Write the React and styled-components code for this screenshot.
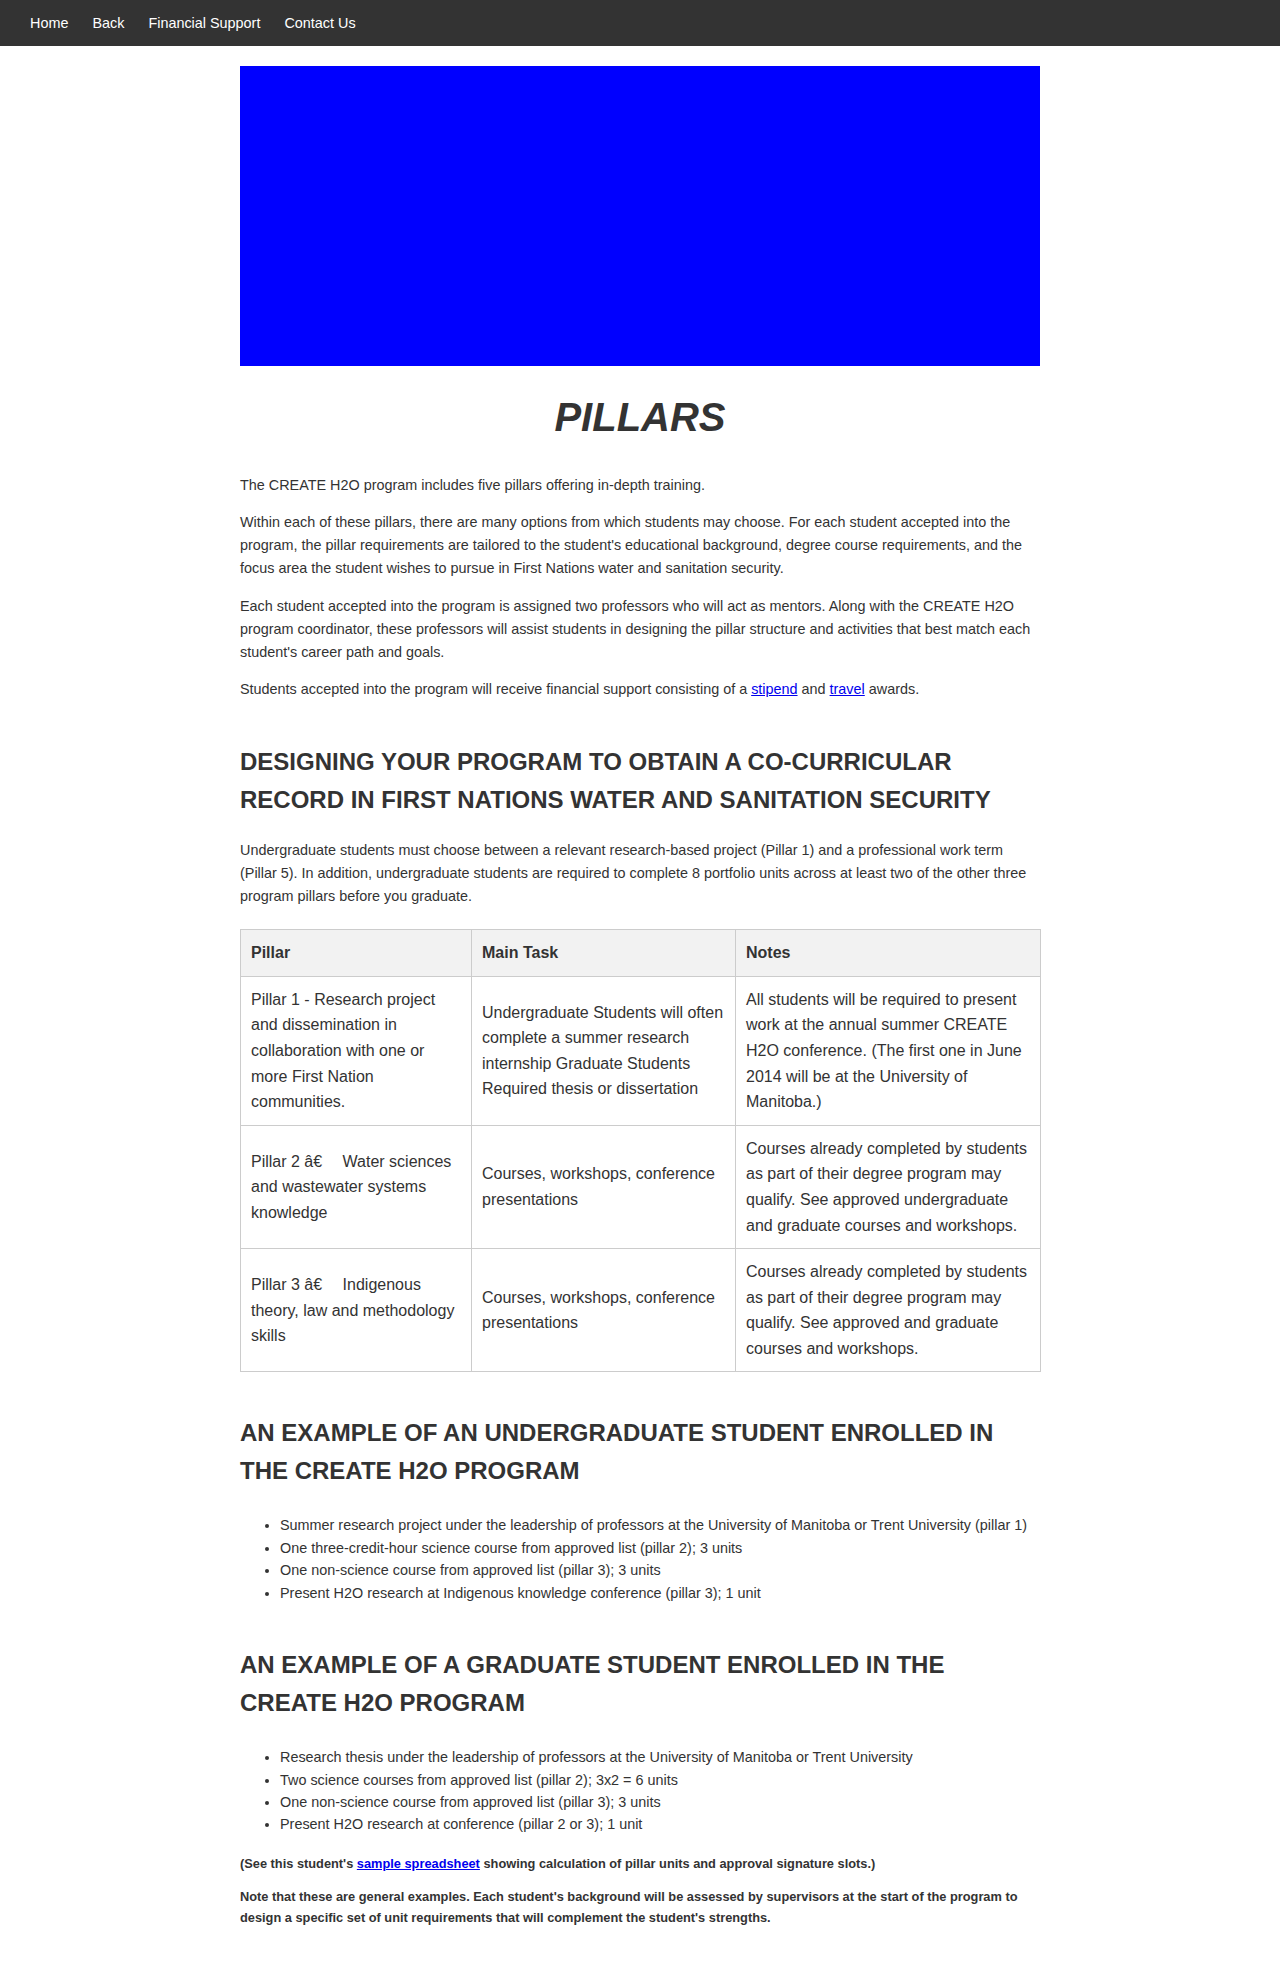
import React from 'react';
import styled, { createGlobalStyle } from 'styled-components';

// Global page styles
const GlobalStyle = createGlobalStyle`
	body {
		margin: 0;
		background: #fff;
		color: #333;
		font-family: "Liberation Sans", Arial, Helvetica, sans-serif;
	}
`;

// Top navigation bar
const Nav = styled.nav`
	display: flex;
	align-items: center;
	height: 46px;
	padding: 0 18px;
	background: #333;
`;

const NavLink = styled.a`
	padding: 0 12px;
	color: #fff;
	font-size: 14.4px;
	text-decoration: none;
`;

// Centered content column
const Page = styled.main`
	width: 800px;
	margin: 0 auto;
	padding: 20px 0 20px;
`;

const Banner = styled.div`
	height: 300px;
	background: #0000ff;
`;

const Title = styled.h1`
	margin: 27px 0 33px;
	font-size: 40px;
	line-height: 48px;
	font-style: italic;
	font-weight: bold;
	text-align: center;
`;

const Text = styled.p`
	margin: 14.4px 0;
	font-size: 14.4px;
	line-height: 23px;
`;

const SectionHeading = styled.h2`
	margin: 42px 0 21px;
	font-size: 24px;
	line-height: 37.5px;
	font-weight: bold;
`;

const Link = styled.a`
	color: #0000ee;
	text-decoration: underline;
`;

// Pillar table
const PillarTable = styled.table`
	width: 100%;
	margin: 21px 0;
	border-collapse: collapse;
	table-layout: fixed;
	font-size: 16px;
	line-height: 25.6px;
`;

// widths are content widths (padding + border come on top)
const HeadCell = styled.th`
	width: ${({ $width }) => $width};
	padding: 10px;
	border: 1px solid #ccc;
	background: #f2f2f2;
	text-align: left;
	font-weight: bold;
`;

const Cell = styled.td`
	padding: 10px;
	border: 1px solid #ccc;
	vertical-align: middle;
`;

const BulletList = styled.ul`
	margin: 25px 0 18px;
	padding-left: 40px;
	font-size: 14.4px;
	line-height: 22.4px;
	list-style: disc;
`;

const Note = styled.p`
	margin: 12.8px 0;
	font-size: 12.8px;
	line-height: 20.5px;
	font-weight: bold;
`;

const rows = [
	{
		pillar: 'Pillar 1 - Research project and dissemination in collaboration with one or more First Nation communities.',
		task: 'Undergraduate Students will often complete a summer research internship Graduate Students Required thesis or dissertation',
		notes: 'All students will be required to present work at the annual summer CREATE H2O conference. (The first one in June 2014 will be at the University of Manitoba.)'
	},
	{
		pillar: 'Pillar 2 \u00e2\u20ac\u2003 Water sciences and wastewater systems knowledge',
		task: 'Courses, workshops, conference presentations',
		notes: 'Courses already completed by students as part of their degree program may qualify. See approved undergraduate and graduate courses and workshops.'
	},
	{
		pillar: 'Pillar 3 \u00e2\u20ac\u2003 Indigenous theory, law and methodology skills',
		task: 'Courses, workshops, conference presentations',
		notes: 'Courses already completed by students as part of their degree program may qualify. See approved and graduate courses and workshops.'
	}
];

const undergrad = [
	'Summer research project under the leadership of professors at the University of Manitoba or Trent University (pillar 1)',
	'One three-credit-hour science course from approved list (pillar 2); 3 units',
	'One non-science course from approved list (pillar 3); 3 units',
	'Present H2O research at Indigenous knowledge conference (pillar 3); 1 unit'
];

const grad = [
	'Research thesis under the leadership of professors at the University of Manitoba or Trent University',
	'Two science courses from approved list (pillar 2); 3x2 = 6 units',
	'One non-science course from approved list (pillar 3); 3 units',
	'Present H2O research at conference (pillar 2 or 3); 1 unit'
];

const App = () => {
	return (
		<>
			<GlobalStyle />
			<Nav>
				<NavLink href="#">Home</NavLink>
				<NavLink href="#">Back</NavLink>
				<NavLink href="#">Financial Support</NavLink>
				<NavLink href="#">Contact Us</NavLink>
			</Nav>
			<Page>
				<Banner />
				<Title>PILLARS</Title>
				<Text>The CREATE H2O program includes five pillars offering in-depth training.</Text>
				<Text>
					Within each of these pillars, there are many options from which students may choose. For each student accepted into the program, the pillar requirements are tailored to the student's educational background, degree course requirements, and the focus area the student wishes to pursue in First Nations water and sanitation security.
				</Text>
				<Text>
					Each student accepted into the program is assigned two professors who will act as mentors. Along with the CREATE H2O program coordinator, these professors will assist students in designing the pillar structure and activities that best match each student's career path and goals.
				</Text>
				<Text>
					Students accepted into the program will receive financial support consisting of a <Link href="#">stipend</Link> and <Link href="#">travel</Link> awards.
				</Text>

				<SectionHeading>DESIGNING YOUR PROGRAM TO OBTAIN A CO-CURRICULAR RECORD IN FIRST NATIONS WATER AND SANITATION SECURITY</SectionHeading>
				<Text>
					Undergraduate students must choose between a relevant research-based project (Pillar 1) and a professional work term (Pillar 5). In addition, undergraduate students are required to complete 8 portfolio units across at least two of the other three program pillars before you graduate.
				</Text>

				<PillarTable>
					<thead>
						<tr>
							<HeadCell $width="210px">Pillar</HeadCell>
							<HeadCell $width="243px">Main Task</HeadCell>
							<HeadCell $width="284px">Notes</HeadCell>
						</tr>
					</thead>
					<tbody>
						{rows.map((row) => (
							<tr key={row.pillar}>
								<Cell>{row.pillar}</Cell>
								<Cell>{row.task}</Cell>
								<Cell>{row.notes}</Cell>
							</tr>
						))}
					</tbody>
				</PillarTable>

				<SectionHeading>AN EXAMPLE OF AN UNDERGRADUATE STUDENT ENROLLED IN THE CREATE H2O PROGRAM</SectionHeading>
				<BulletList>
					{undergrad.map((item) => <li key={item}>{item}</li>)}
				</BulletList>

				<SectionHeading>AN EXAMPLE OF A GRADUATE STUDENT ENROLLED IN THE CREATE H2O PROGRAM</SectionHeading>
				<BulletList>
					{grad.map((item) => <li key={item}>{item}</li>)}
				</BulletList>

				<Note>
					(See this student's <Link href="#">sample spreadsheet</Link> showing calculation of pillar units and approval signature slots.)
				</Note>
				<Note>
					Note that these are general examples. Each student's background will be assessed by supervisors at the start of the program to design a specific set of unit requirements that will complement the student's strengths.
				</Note>
			</Page>
		</>
	);
};

export default App;
